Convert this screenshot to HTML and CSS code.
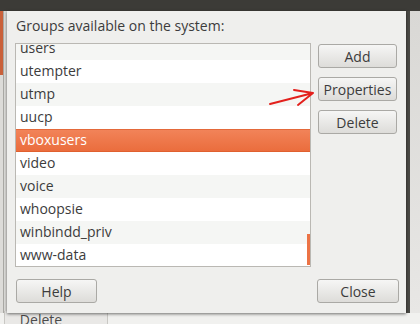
FILE: index.html
```html
<!DOCTYPE html>
<html>
<head>
<meta charset="utf-8">
<link rel="stylesheet" href="styles.css">
</head>
<body>
<div class="desk">
  <div class="topband"></div>
  <div class="rightdark"></div>
  <div class="leftstrip"><div class="orange"></div><div class="edge"></div></div>
  <div class="dialog">
    <div class="label">Groups available on the system:</div>
    <div class="main">
      <div class="list">
        <div class="rows">
          <div class="row alt">users</div>
          <div class="row">utempter</div>
          <div class="row alt">utmp</div>
          <div class="row">uucp</div>
          <div class="row sel">vboxusers</div>
          <div class="row">video</div>
          <div class="row alt">voice</div>
          <div class="row">whoopsie</div>
          <div class="row alt">winbindd_priv</div>
          <div class="row">www-data</div>
        </div>
        <div class="scroll"></div>
      </div>
      <div class="side">
        <button class="btn">Add</button>
        <button class="btn">Properties</button>
        <button class="btn">Delete</button>
      </div>
    </div>
    <div class="footer">
      <button class="btn help">Help</button>
      <button class="btn close">Close</button>
    </div>
  </div>
  <div class="rightlight"></div>
  <div class="bottom">
    <div class="bgbtn">Delete</div>
  </div>
</div>
<svg class="arrow" width="60" height="30" viewBox="0 0 60 30">
  <path d="M5 19 L48 8 M29 5 L48 8 L33 20" fill="none" stroke="#e3201c" stroke-width="2" stroke-linecap="round" stroke-linejoin="round"/>
</svg>
</body>
</html>
```
FILE: styles.css
```css
html, body {
  margin: 0;
  padding: 0;
}
body {
  width: 420px;
  height: 324px;
  overflow: hidden;
  position: relative;
  background: #ecebe9;
  font-family: "Open Sans", "DejaVu Sans", sans-serif;
  font-size: 14px;
  color: #3c3c3c;
}
.desk {
  display: grid;
  grid-template-columns: 7px 399px 4px 10px;
  grid-template-rows: 11px 302px 11px;
  width: 420px;
  height: 324px;
}
.topband {
  grid-column: 1 / 5;
  grid-row: 1;
  background: #3c3b37;
}
.rightdark {
  grid-column: 3;
  grid-row: 2;
  background: #4a4945;
}
.rightlight {
  grid-column: 4;
  grid-row: 2;
  background: linear-gradient(#d9d8d5, #e8e7e5);
}
.leftstrip {
  grid-column: 1;
  grid-row: 2;
  display: flex;
  background: #dcdbd8;
}
.orange {
  width: 3px;
  height: 64px;
  background: #c9603a;
}
.edge {
  width: 1px;
  background: #a9a8a4;
}
.dialog {
  grid-column: 2;
  grid-row: 2;
  position: relative;
  z-index: 2;
  background: #efefed;
  box-shadow: 0 1px 3px rgba(0, 0, 0, 0.55);
  padding: 7px 7px 10px 8px;
  display: flex;
  flex-direction: column;
}
.label {
  height: 16px;
  line-height: 16px;
  margin-left: 1px;
  margin-bottom: 9px;
  white-space: nowrap;
}
.main {
  display: flex;
  gap: 7px;
}
.list {
  position: relative;
  width: 294px;
  height: 222px;
  border: 1px solid #bab8b3;
  background: #ffffff;
  overflow: hidden;
}
.rows {
  margin-top: -7px;
}
.row {
  height: 23px;
  line-height: 22px;
  padding-left: 4px;
  background: #ffffff;
  white-space: nowrap;
}
.row.alt {
  background: #f5f6f4;
}
.row.sel {
  background: linear-gradient(#f2845a, #ea6c3c);
  color: #ffffff;
  box-shadow: inset 0 -1px 0 #e0602f, inset 0 1px 0 #e4693a;
}
.scroll {
  position: absolute;
  right: 0;
  top: 190px;
  width: 3px;
  height: 31px;
  background: #ec7345;
}
.side {
  display: flex;
  flex-direction: column;
  gap: 9px;
  margin-top: 1px;
  width: 79px;
}
.btn {
  height: 24px;
  padding: 0;
  border: 1px solid #aaa9a5;
  border-radius: 3px;
  background: linear-gradient(#f6f6f5, #dddcd9);
  font-family: inherit;
  font-size: 14px;
  color: #3c3c3c;
  box-sizing: border-box;
}
.side .btn {
  width: 79px;
}
.footer {
  display: flex;
  justify-content: space-between;
  margin-top: 12px;
}
.help {
  width: 81px;
  margin-left: 1px;
}
.close {
  width: 82px;
}
.bottom {
  grid-column: 1 / 5;
  grid-row: 3;
  background: #f1f1ef;
  display: flex;
}
.bgbtn {
  width: 104px;
  margin-left: 4px;
  border-left: 1px solid #c9c8c4;
  border-right: 1px solid #c9c8c4;
  background: #e9e8e6;
  text-align: center;
  line-height: 18px;
  margin-top: -2px;
  color: #4c4c4c;
  padding-right: 30px;
  box-sizing: border-box;
}
.arrow {
  position: absolute;
  left: 265px;
  top: 85px;
  z-index: 5;
}
```
